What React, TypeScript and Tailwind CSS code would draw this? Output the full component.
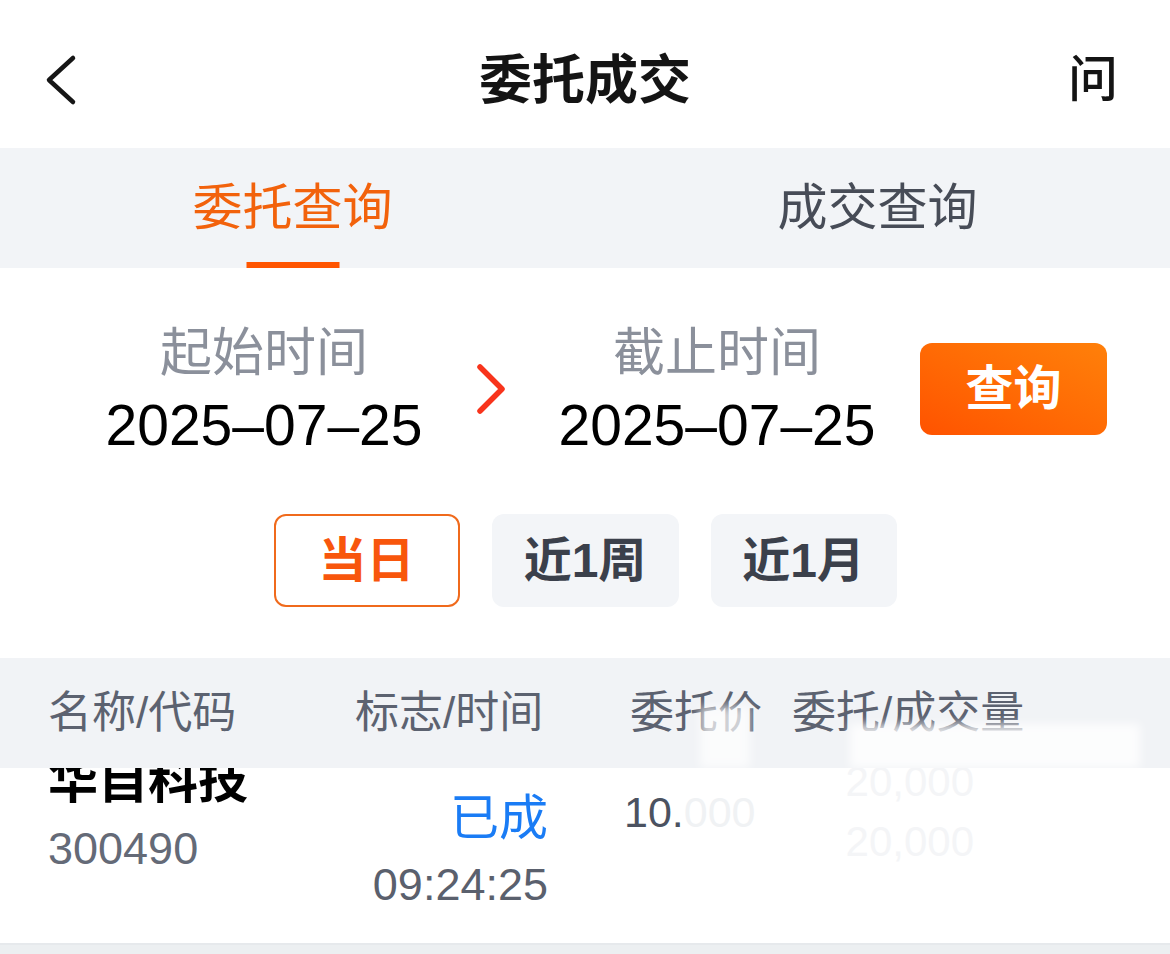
import React from "react";

const F = "font-['Liberation_Sans','Noto_Sans_CJK_SC',sans-serif]";

export default function App() {
  return (
    <div className={`w-[1170px] h-[954px] overflow-hidden bg-[#eceff1] ${F}`}>
      {/* Nav bar */}
      <div className="h-[148px] bg-white grid grid-cols-[1fr_auto_1fr] items-center px-[40px] pt-[12px]">
        <svg width="40" height="56" viewBox="0 0 40 56" className="ml-[2px]">
          <path d="M31 6 L7 28 L31 50" fill="none" stroke="#161616" strokeWidth="4.5" strokeLinecap="round" strokeLinejoin="round" />
        </svg>
        <div className="text-[53px] font-semibold text-[#141414] leading-none">委托成交</div>
        <div className="justify-self-end text-[50px] font-medium text-[#141414] leading-none mr-[12px]">问</div>
      </div>

      {/* Tabs */}
      <div className="h-[120px] bg-[#f2f4f7] flex">
        <div className="flex-1 relative flex items-center justify-center">
          <span className="text-[50px] text-[#f2620c] leading-none">委托查询</span>
          <div className="absolute bottom-0 left-1/2 -translate-x-1/2 w-[93px] h-[6px] bg-[#ff5500]" />
        </div>
        <div className="flex-1 flex items-center justify-center">
          <span className="text-[50px] text-[#474c57] leading-none">成交查询</span>
        </div>
      </div>

      {/* Date section */}
      <div className="h-[390px] bg-white pt-[49px]">
        <div className="flex items-center pl-[64px]">
          <div className="w-[400px] flex flex-col items-center">
            <div className="text-[52px] leading-[72px] text-[#8b909b]">起始时间</div>
            <div className="text-[57px] leading-[72px] text-black">2025–07–25</div>
          </div>
          <div className="w-[54px] flex justify-center">
            <svg width="34" height="52" viewBox="0 0 34 52">
              <path d="M6 4 L28 26 L6 48" fill="none" stroke="#f8341c" strokeWidth="5.5" strokeLinecap="round" strokeLinejoin="round" />
            </svg>
          </div>
          <div className="w-[398px] flex flex-col items-center">
            <div className="text-[52px] leading-[72px] text-[#8b909b]">截止时间</div>
            <div className="text-[57px] leading-[72px] text-black">2025–07–25</div>
          </div>
          <div className="ml-[4px] w-[187px] h-[92px] rounded-[12px] bg-linear-to-tr from-[#ff5200] to-[#ff800a] flex items-center justify-center">
            <span className="text-[48px] font-semibold text-white leading-none">查询</span>
          </div>
        </div>
        <div className="flex justify-center gap-[32px] mt-[53px]">
          <div className="w-[186px] h-[93px] rounded-[12px] border-[2.5px] border-[#f06a1c] flex items-center justify-center">
            <span className="text-[48px] font-bold text-[#f8560c] leading-none">当日</span>
          </div>
          <div className="w-[187px] h-[93px] rounded-[12px] bg-[#f3f5f8] flex items-center justify-center">
            <span className="text-[48px] font-bold text-[#3b404b] leading-none">近1周</span>
          </div>
          <div className="w-[186px] h-[93px] rounded-[12px] bg-[#f3f5f8] flex items-center justify-center">
            <span className="text-[48px] font-bold text-[#3b404b] leading-none">近1月</span>
          </div>
        </div>
      </div>

      {/* Table header */}
      <div className="relative h-[110px] bg-[#f1f3f6] flex items-center pl-[48px] text-[44px] text-[#5c6270] leading-none">
        <div className="w-[307px]">名称/代码</div>
        <div className="w-[275px]">标志/时间</div>
        <div className="w-[162px]">委托价</div>
        <div>委托/成交量</div>
        <div className="absolute left-[700px] top-[48px] w-[50px] h-[62px] bg-white/70 blur-[5px]" />
        <div className="absolute left-[850px] top-[66px] w-[290px] h-[44px] bg-white/80 blur-[5px]" />
      </div>

      {/* Row */}
      <div className="relative h-[177px] bg-white overflow-hidden border-b-[2px] border-[#e6e9ec] flex pl-[48px]">
        <div className="w-[307px] flex flex-col">
          <div className="text-[50px] font-bold text-black leading-[60px] -mt-[17px]">华自科技</div>
          <div className="text-[45px] text-[#646a77] leading-[60px] mt-[8px]">300490</div>
        </div>
        <div className="w-[193px] flex flex-col items-end">
          <div className="text-[49px] text-[#1a7cf5] leading-[60px] mt-[20px]">已成</div>
          <div className="text-[45px] text-[#5a606d] leading-[60px] mt-[7px]">09:24:25</div>
        </div>
        <div className="w-[77px]" />
        <div className="w-[210px] -ml-[1px]">
          <div className="text-[43px] leading-[60px] mt-[14px] text-[#4b5260]">
            10.<span className="text-[#f0f2f4]">000</span>
          </div>
        </div>
        <div className="w-[140px] flex flex-col items-end text-[42px] text-[#f4f5f7] leading-[56px]">
          <div className="-mt-[14px]">20,000</div>
          <div className="mt-[4px]">20,000</div>
        </div>
      </div>
    </div>
  );
}
